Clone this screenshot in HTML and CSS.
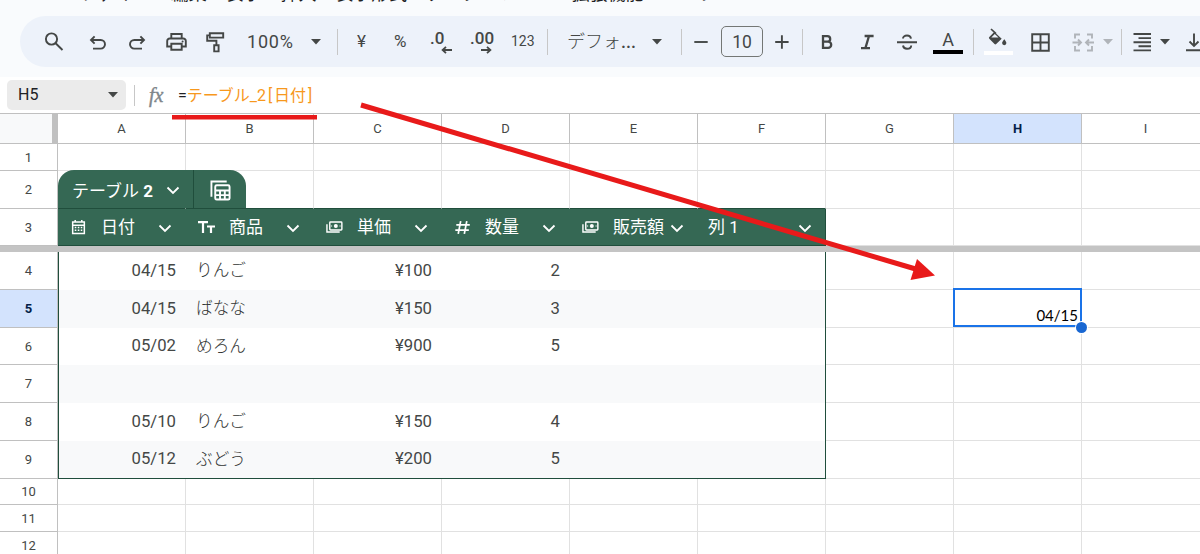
FILE: index.html
```html
<!DOCTYPE html>
<html lang="ja">
<head>
  <meta charset="UTF-8">
  <title>スプレッドシート</title>
  <link rel="stylesheet" href="styles.css">
</head>
<body>

<svg width="0" height="0" class="defs">
  <symbol id="chevron" viewBox="0 0 14 9"><path d="M1.5 1.5L7 7l5.5-5.5" fill="none" stroke="#fff" stroke-width="1.8"/></symbol>
  <symbol id="caret" viewBox="0 0 10 6"><path d="M0 0h10L5 5.5z" fill="currentColor"/></symbol>
  <symbol id="money" viewBox="0 0 18 14"><g fill="none" stroke="#fff" stroke-width="1.5"><rect x="4" y="1.7" width="12.8" height="8.4" rx=".8"/><path d="M1 4v8.3h13.5"/></g><circle cx="10.4" cy="5.9" r="2.1" fill="#fff"/><path d="M5.3 5.9h1.2M14.3 5.9h1.2" stroke="#fff" stroke-width="1.2"/></symbol>
</svg>

<header>
  <nav class="menu">
    <span>ファイル</span><span>編集</span><span>表示</span><span>挿入</span><span>表示形式</span><span>データ</span><span>ツール</span><span>拡張機能</span><span>ヘルプ</span>
  </nav>
  <div class="toolbar">
    <svg class="icon" viewBox="0 0 24 24"><circle cx="9.5" cy="9" r="5.6"/><path d="M13.6 13.2L20.5 20"/></svg>
    <svg class="icon" viewBox="0 0 24 24"><path d="M8.6 6.3L5 10l3.6 3.7M5.3 10h9.4a4.3 4.3 0 0 1 0 8.6H7"/></svg>
    <svg class="icon" viewBox="0 0 24 24"><path d="M15.4 6.3L19 10l-3.6 3.7M18.7 10H9.3a4.3 4.3 0 0 0 0 8.6H17"/></svg>
    <svg class="icon" viewBox="0 0 24 24"><path d="M7.3 8V4h10.4v4M7.3 16.5H3.2V11a2.5 2.5 0 0 1 2.5-2.5h13.6a2.5 2.5 0 0 1 2.5 2.5v5.5h-4.1M7.3 13.8h10.4v6H7.3z"/><circle class="solid" cx="18.6" cy="11.6" r="1"/></svg>
    <svg class="icon" viewBox="0 0 24 24"><path d="M6.8 3.2h13.4v4.4H6.8zM6.8 5.4H4.2v5.4h9.2v4.3M11.2 15.2h4.4v6.2h-4.4z"/></svg>
    <span class="zoom">100%</span>
    <svg class="caret"><use href="#caret"/></svg>
    <i class="sep"></i>
    <span class="small">¥</span>
    <span class="small">%</span>
    <span class="decimal">.0<svg viewBox="0 0 11 8"><path d="M11 4H2M5 .8L1.6 4 5 7.2"/></svg></span>
    <span class="decimal">.00<svg viewBox="0 0 11 8"><path d="M0 4h9M6 .8L9.4 4 6 7.2"/></svg></span>
    <span class="small num">123</span>
    <i class="sep"></i>
    <span class="font-name">デフォ<b>...</b></span>
    <svg class="caret"><use href="#caret"/></svg>
    <i class="sep"></i>
    <svg class="icon" viewBox="0 0 24 24"><path d="M5.3 12h13.4"/></svg>
    <span class="size">10</span>
    <svg class="icon" viewBox="0 0 24 24"><path d="M5.2 12h13.4M11.9 5.3v13.4"/></svg>
    <i class="sep"></i>
    <svg class="icon bold" viewBox="0 0 24 24"><path d="M8 6.1h4.4a2.8 2.8 0 0 1 0 5.6H8zM8 11.7h5.1a3.1 3.1 0 0 1 0 6.2H8z"/></svg>
    <svg class="icon bold" viewBox="0 0 24 24"><path d="M9.600 6h9M6 18.200h9M14 6l-3.600 12.200"/></svg>
    <svg class="icon" viewBox="0 0 24 24"><path d="M2 12.200h20M16 8.700C15.700 6.600 14 5.500 12 5.500c-2.500 0-4 1.300-4 3.100M8 15.500c.3 2.200 2 3.300 4 3.300 2.600 0 4.200-1.300 4.200-3.300"/></svg>
    <span class="text-color">A</span>
    <i class="sep"></i>
    <span class="fill-color"><svg viewBox="0 0 20 18"><path d="M3.500 1.200l10.200 9.500-5.500 5.300a1.200 1.200 0 0 1-1.700 0L1.300 10.800a1.200 1.200 0 0 1 0-1.700l4.900-5zM6.800 6L3.300 9.500h7.200z" fill-rule="evenodd"/><path d="M3 1l5 4.700" stroke="#444746" stroke-width="1.700"/><path d="M16.300 11.200s-2.200 2.400-2.200 3.900a2.100 2.100 0 0 0 4.300 0c0-1.500-2.100-3.900-2.100-3.900z"/></svg></span>
    <svg class="icon" viewBox="0 0 24 24"><path d="M4.200 4.200h16.600v16.600H4.200zM12.500 4v17M4 12.500h17"/></svg>
    <svg class="icon off" viewBox="0 0 24 24"><path d="M9 4.500H4v4M4 16v4.500h5M16 4.500h5v4M21 16v4.500h-5M1.500 12.500h8M7 9.500l3 3-3 3M23 12.500h-8M18 9.500l-3 3 3 3"/></svg>
    <svg class="caret off"><use href="#caret"/></svg>
    <i class="sep"></i>
    <svg class="icon" viewBox="0 0 24 24"><path d="M3.500 4h17.500M8.500 8.100H21M3.500 12.200h17.500M8.500 16.300H21M3.500 20.400h17.500"/></svg>
    <svg class="caret"><use href="#caret"/></svg>
    <svg class="icon" viewBox="0 0 24 24"><path d="M11 3.500v12M6.500 11.500L11 16l4.500-4.500M3 20.200h17"/></svg>
  </div>
</header>

<div class="formula-bar">
  <div class="name-box"><span>H5</span><svg class="caret"><use href="#caret"/></svg></div>
  <i class="sep"></i>
  <span class="fx">fx</span>
  <span class="formula">=<b>テーブル<u>_</u>2<s>[</s>日付<s>]</s></b></span>
</div>

<div class="sheet">
  <table>
    <tr class="cols"><th class="corner"></th><th>A</th><th>B</th><th>C</th><th>D</th><th>E</th><th>F</th><th>G</th><th class="active">H</th><th>I</th></tr>
    <tr class="r27"><th>1</th><td></td><td></td><td></td><td></td><td></td><td></td><td></td><td></td><td></td></tr>
    <tr class="r38 above"><th>2</th><td></td><td></td><td></td><td></td><td></td><td></td><td></td><td></td><td></td></tr>
    <tr class="r37 fields">
      <th>3</th>
      <td><div class="field">
        <svg viewBox="0 0 16 17"><path d="M1.800 3.300h12.400v12H1.800zM4.500 1v2.500M11.500 1v2.500M2 6.600h12" fill="none" stroke="#fff" stroke-width="1.600"/><path d="M4 9h8M4 12h8" stroke="#fff" stroke-width="1.600" stroke-dasharray="1.700 1.500"/></svg>
        <span>日付</span><svg class="chevron"><use href="#chevron"/></svg>
      </div></td>
      <td><div class="field">
        <svg viewBox="0 0 17 14"><path d="M0 2.200h10M5 2.200V13M9 6.500h8M13 6.500V13" fill="none" stroke="#fff" stroke-width="2.200"/></svg>
        <span>商品</span><svg class="chevron"><use href="#chevron"/></svg>
      </div></td>
      <td><div class="field"><svg><use href="#money"/></svg><span>単価</span><svg class="chevron"><use href="#chevron"/></svg></div></td>
      <td><div class="field">
        <svg class="hash" viewBox="0 0 14 14"><path d="M5.300 1L3 13M11 1L8.700 13M1.200 4.600h12.600M.3 9.400h12.600" fill="none" stroke="#fff" stroke-width="1.600"/></svg>
        <span>数量</span><svg class="chevron"><use href="#chevron"/></svg>
      </div></td>
      <td><div class="field"><svg><use href="#money"/></svg><span>販売額</span><svg class="chevron"><use href="#chevron"/></svg></div></td>
      <td><div class="field plain"><span>列 1</span><svg class="chevron"><use href="#chevron"/></svg></div></td>
      <td></td><td></td><td></td>
    </tr>
    <tr class="freeze"><td colspan="10"></td></tr>
    <tr class="r38 data"><th>4</th><td class="n first">04/15</td><td>りんご</td><td class="n">¥100</td><td class="n">2</td><td></td><td class="last"></td><td></td><td></td><td></td></tr>
    <tr class="r38 data band"><th class="active">5</th><td class="n first">04/15</td><td>ばなな</td><td class="n">¥150</td><td class="n">3</td><td></td><td class="last"></td><td></td><td class="selected"><div>04/15</div></td><td></td></tr>
    <tr class="r37 data"><th>6</th><td class="n first">05/02</td><td>めろん</td><td class="n">¥900</td><td class="n">5</td><td></td><td class="last"></td><td></td><td></td><td></td></tr>
    <tr class="r38 data band"><th>7</th><td class="first"></td><td></td><td></td><td></td><td></td><td class="last"></td><td></td><td></td><td></td></tr>
    <tr class="r38 data"><th>8</th><td class="n first">05/10</td><td>りんご</td><td class="n">¥150</td><td class="n">4</td><td></td><td class="last"></td><td></td><td></td><td></td></tr>
    <tr class="r38 data band end"><th>9</th><td class="n first">05/12</td><td>ぶどう</td><td class="n">¥200</td><td class="n">5</td><td></td><td class="last"></td><td></td><td></td><td></td></tr>
    <tr class="r26"><th>10</th><td></td><td></td><td></td><td></td><td></td><td></td><td></td><td></td><td></td></tr>
    <tr class="r27"><th>11</th><td></td><td></td><td></td><td></td><td></td><td></td><td></td><td></td><td></td></tr>
    <tr class="r27"><th>12</th><td></td><td></td><td></td><td></td><td></td><td></td><td></td><td></td><td></td></tr>
  </table>

  <div class="table-tab">
    <div class="tab-name"><span>テーブル <b>2</b></span><svg class="chevron"><use href="#chevron"/></svg></div>
    <div class="tab-icon"><svg viewBox="0 0 22 22" fill="none" stroke="#fff"><path d="M1.500 17.500V1.500h16" stroke-width="2"/><rect x="5.500" y="5.500" width="15" height="15" rx="1.500" stroke-width="2"/><path d="M5.500 11h15M5.500 15.800h15M10.500 11v9.500M15.500 11v9.500" stroke-width="2"/></svg></div>
  </div>
</div>

<svg class="notes" viewBox="0 0 1200 554">
  <path d="M172 117.300h145" stroke-width="4.600"/>
  <path d="M361 105l558 165" stroke-width="5"/>
  <path d="M935 275.500L917 259l-6.500 21z" class="head"/>
</svg>

</body>
</html>
```

FILE: styles.css
```css
* {
  box-sizing: border-box;
}

body {
  margin: 0;
  height: 554px;
  overflow: hidden;
  position: relative;
  background: #fff;
  color: #444746;
  font-family: Roboto, "Noto Sans CJK JP", sans-serif;
}

.defs {
  position: absolute;
}

header {
  height: 77px;
  background: #f9fbfd;
  overflow: hidden;
}

/* only the foot of the menu row stays in view */
.menu {
  display: flex;
  gap: 18.8px;
  height: 34px;
  margin-top: -18px;
  padding-left: 80px;
  font-size: 18px;
  line-height: 24px;
  color: #1f1f1f;
  white-space: nowrap;
}

/* toolbar */
.toolbar {
  display: grid;
  grid-template-columns: 44px 39px 39px 39px 44px 64px 26px 20px 37px 36px 40px 41px 36px 20px 85px 29px 8px 32px 49px 32px 13px 40px 40px 38px 40px 11px 44px 43px 32px 18px 9px 30px 23px 24px;
  align-items: center;
  width: 1300px;
  height: 51px;
  margin-left: 20px;
  padding-left: 22px;
  background: #edf2fa;
  border-radius: 26px;
}

.icon {
  width: 24px;
  height: 24px;
  fill: none;
  stroke: #444746;
  stroke-width: 1.9;
}

.icon.bold {
  stroke-width: 2.3;
}

.icon .solid {
  fill: #444746;
  stroke: none;
}

.icon.off {
  stroke: #b0b4b9;
}

.caret {
  width: 10px;
  height: 6px;
  color: #444746;
}

.caret.off {
  color: #b0b4b9;
}

.sep {
  width: 1px;
  height: 26px;
  background: #c7c7c7;
}

.zoom {
  font-size: 18px;
  letter-spacing: 0.8px;
}

.small {
  font-size: 17px;
  margin-top: -2px;
}

.small.num {
  font-size: 14px;
}

.decimal {
  position: relative;
  font-size: 17px;
  font-weight: 500;
  line-height: 20px;
  margin-top: -8px;
}

.decimal svg {
  position: absolute;
  left: 11px;
  top: 18px;
  width: 11px;
  height: 8px;
  fill: none;
  stroke: #444746;
  stroke-width: 1.8;
}

.font-name {
  margin-top: -4px;
  font-size: 18px;
  font-weight: 300;
  white-space: nowrap;
}

.font-name b {
  font-weight: 500;
}

.size {
  width: 42px;
  height: 31px;
  border: 1px solid #747775;
  border-radius: 5px;
  text-align: center;
  font-size: 17.5px;
  line-height: 30px;
}

.text-color {
  width: 30px;
  height: 24px;
  border-bottom: 4px solid #000;
  text-align: center;
  font-size: 18px;
  line-height: 19px;
}

.fill-color {
  width: 29px;
  height: 28px;
  border-bottom: 4px solid #fff;
  padding-left: 4px;
  margin-top: -2px;
}

.fill-color svg {
  display: block;
  width: 20px;
  height: 18px;
  margin-top: 1px;
  fill: #444746;
}

/* formula bar */
.formula-bar {
  display: flex;
  align-items: center;
  height: 36px;
  padding-left: 7px;
}

.name-box {
  display: flex;
  align-items: center;
  justify-content: space-between;
  width: 119px;
  height: 30px;
  padding: 0 8px 0 11px;
  background: #ebebeb;
  border-radius: 5px;
  font-size: 16px;
  line-height: 28px;
  color: #202124;
}

.formula-bar .sep {
  height: 21px;
  margin: 0 14px 0 8px;
}

.fx {
  width: 29px;
  font-family: "Liberation Serif", serif;
  font-style: italic;
  font-size: 20px;
  -webkit-text-stroke: 0.4px #80868b;
  color: #80868b;
}

.formula {
  padding-bottom: 3px;
  font-size: 16px;
  color: #202124;
}

.formula b {
  font-weight: 400;
  color: #f7981d;
}

.formula u {
  text-decoration: none;
}

.formula s {
  display: inline-block;
  width: 8px;
  text-align: center;
  text-decoration: none;
}

/* sheet */
.sheet {
  position: relative;
  border-top: 1px solid #c0c0c0;
}

table {
  table-layout: fixed;
  width: 1210px;
  border-collapse: separate;
  border-spacing: 0;
}

th, td {
  width: 128px;
  padding: 0;
  border-right: 1px solid #e1e1e1;
  border-bottom: 1px solid #e1e1e1;
}

th {
  border-color: #c0c0c0;
  font-size: 13px;
  font-weight: 400;
}

th:first-child {
  width: 58px;
}

.cols th {
  height: 30px;
}

.cols .corner {
  background: #f8f9fa;
  border-right: 6px solid #c0c0c0;
}

th.active {
  background: #d3e3fd;
  color: #041e49;
  font-weight: 700;
}

.r26 { height: 26px; }
.r27 { height: 27px; }
.r37 { height: 37px; }
.r38 { height: 38px; }

.above td:nth-child(-n+7) {
  border-bottom-color: #204e3c;
}

.fields td:nth-child(-n+7) {
  background: #356854;
  border-bottom: 1px solid #204e3c;
  border-right: 0;
}

.fields td:nth-child(7) {
  border-right: 1px solid #204e3c;
}

.field {
  display: grid;
  grid-template-columns: 31px 56.5px 14px;
  align-items: center;
  padding-left: 12px;
  color: #fff;
  font-size: 17px;
  line-height: 24px;
  white-space: nowrap;
}

.field span {
  margin-top: -1px;
}

.field svg {
  width: 17px;
  height: 16px;
}

.field .hash {
  height: 15px;
}

.field.plain {
  grid-template-columns: 87.5px 14px;
}

.field.plain span {
  margin-left: -2px;
}

.field .chevron, .tab-name .chevron {
  width: 14px;
  height: 9px;
}

.field .chevron {
  margin-top: 2px;
}

.freeze td {
  height: 6px;
  border: 0;
  background: #c4c4c4;
}

.data td {
  font-size: 16.7px;
}

.data td:nth-child(-n+7) {
  border-right: 0;
  border-bottom: 0;
  padding-left: 10px;
  padding-bottom: 2px;
}

.band td:nth-child(-n+7) {
  background: #f8f9fa;
}

.data .n {
  text-align: right;
  padding-right: 10px;
}

.data td:nth-child(3) {
  font-weight: 300;
  color: #303332;
  padding-bottom: 4px;
}

.data .first {
  border-left: 1px solid #204e3c;
}

.data td.last {
  border-right: 1px solid #204e3c;
}

.data.end td:nth-child(-n+7) {
  border-bottom: 1px solid #204e3c;
}

.selected {
  position: relative;
}

.selected div {
  position: absolute;
  top: -2px;
  left: -1px;
  width: 129px;
  height: 39px;
  border: 2px solid #1a73e8;
  padding: 15px 2px 0 0;
  text-align: right;
  font-family: Lato, sans-serif;
  font-size: 15px;
  line-height: 20px;
  color: #000;
}

.selected div::after {
  content: "";
  position: absolute;
  right: -7px;
  bottom: -8px;
  width: 11px;
  height: 11px;
  border-radius: 50%;
  background: #1967d2;
  box-shadow: 0 0 0 1px #fff;
}

/* name tab that sits on top of row 2 */
.table-tab {
  position: absolute;
  left: 58px;
  top: 56px;
  display: flex;
  width: 188px;
  height: 38px;
  border-radius: 16px 16px 0 0;
  background: #356854;
  color: #fff;
}

.tab-name {
  display: flex;
  align-items: center;
  justify-content: space-between;
  width: 136px;
  padding: 0 13px 0 14px;
  border-right: 1px solid #204e3c;
  font-size: 17px;
}

.tab-name .chevron {
  margin-top: 3px;
}

.tab-icon {
  flex: 1;
  display: grid;
  place-items: center;
  padding-top: 2px;
}

.tab-icon svg {
  width: 21px;
  height: 21px;
}

.notes {
  position: absolute;
  top: 0;
  left: 0;
  width: 1200px;
  height: 554px;
  fill: none;
  stroke: #e81a1a;
}

.notes .head {
  fill: #e81a1a;
  stroke: none;
}
```
